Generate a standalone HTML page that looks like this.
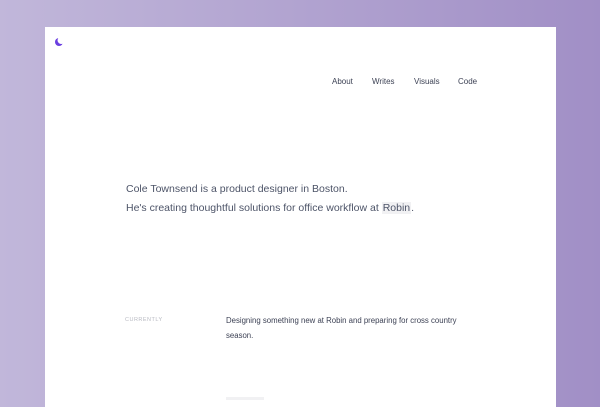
<!DOCTYPE html>
<html><head><style>
body{margin:0;width:600px;height:400px;overflow:hidden;background:linear-gradient(90deg,#c1b7da 0%,#a18fc6 100%);font-family:"Liberation Sans",sans-serif;position:relative}
.card{position:absolute;left:45px;top:27px;width:511px;height:380px;background:#fff}
.moon{position:absolute;left:54px;top:37px}
.nav{position:absolute;top:77px;font-size:8px;color:#3d4255}
.h{position:absolute;left:126px;font-size:10.5px;color:#4d5468;white-space:nowrap}
.hl{background:#f1f1f3;padding:0 1px}
.lab{position:absolute;left:125px;top:317px;font-size:5.5px;letter-spacing:0.5px;color:#b8bac2}
.p{position:absolute;left:226px;top:313px;width:250px;font-size:7.8px;line-height:15px;color:#3d4255}
.box{position:absolute;left:226px;top:397px;width:38px;height:3px;background:#f1f1f3}
</style></head><body>
<div class="card"></div>
<svg class="moon" width="10" height="10" viewBox="0 0 10 10"><circle cx="5" cy="5" r="4" fill="#6b3fe0"/><circle cx="7.3" cy="3.2" r="3.8" fill="#fff"/></svg>
<div class="nav" style="left:332px">About</div>
<div class="nav" style="left:372px">Writes</div>
<div class="nav" style="left:414px">Visuals</div>
<div class="nav" style="left:458px">Code</div>
<div class="h" style="top:183px">Cole Townsend is a product designer in Boston.</div>
<div class="h" style="top:202px">He's creating thoughtful solutions for office workflow at <span class="hl">Robin</span>.</div>
<div class="lab">CURRENTLY</div>
<div class="p">Designing something new at Robin and preparing for cross country season.</div>
<div class="box"></div>
</body></html>
